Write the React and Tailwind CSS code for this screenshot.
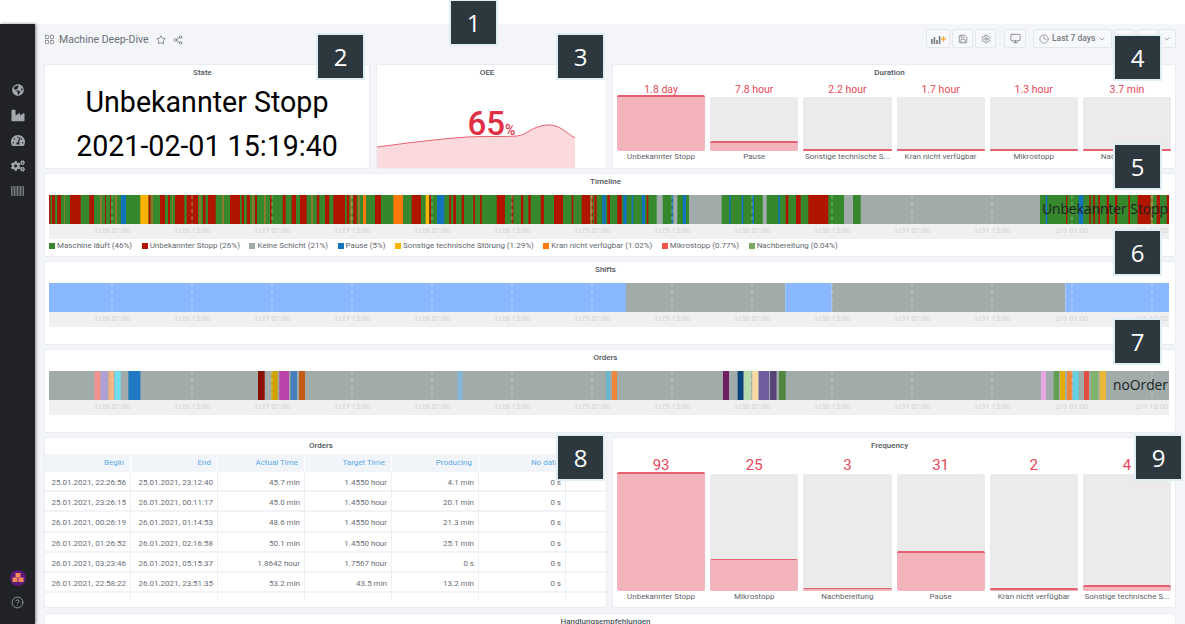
import React from 'react';
import { LayoutGrid, Star, Share2, Save, Settings, Monitor, Clock, ChevronDown, CircleHelp } from 'lucide-react';
import { FaGlobeAmericas, FaIndustry, FaTachometerAlt, FaCogs } from 'react-icons/fa';

const GREEN = '#37872d';
const RED = '#b01500';
const GREY = '#a0abaa';
const BLUE = '#1173bb';
const YELLOW = '#fdb400';
const ORANGE = '#ff780a';
const OLIVE = '#8c7a2c';

// x positions are taken in page pixels, the chart starts at 49
const timelineSegments = [
  ...[[49, 50.5], [52, 55], [57.3, 61], [70, 80.7], [89.3, 94], [105, 106], [110, 111], [148.5, 150.7], [160, 165], [168, 170], [175, 184.3], [186.7, 192.7], [193, 198], [203, 205.5], [208, 215.7], [230, 240], [241.7, 244], [246.7, 250], [255, 257], [270, 271.6], [282.7, 285.7], [291.7, 296], [300, 306.7], [316.7, 319.3], [325, 329.3], [333.3, 345], [346.7, 349.3], [353.3, 356.7], [375, 381], [411.7, 421], [429.5, 431], [449.3, 451], [453.3, 456], [461.7, 464], [473.3, 475], [480, 481.7], [496.7, 505], [511.7, 513.3], [521, 523.3], [528.3, 530.7], [540.7, 544], [554, 563], [571.7, 573.3], [581.7, 593], [594.3, 596.7], [607.3, 610], [617.3, 621.7], [646.7, 648.3], [785.7, 788.3], [796, 800.7], [808.3, 828.3], [1066, 1067.3], [1089.3, 1090.7], [1093.3, 1095], [1098.3, 1100], [1106.7, 1109], [1115, 1117.3], [1128.3, 1130], [1137.7, 1150.7], [1156.7, 1160], [1166.7, 1169]].map((s) => [...s, RED]),
  ...[[121, 126], [437, 444.3], [602.3, 605.7], [623.3, 626.7], [631.7, 633.3], [641.7, 645], [671.7, 673.3], [682.7, 686], [729.3, 730.7], [741.7, 743.3], [752.3, 754], [778.3, 780], [1045.7, 1047.3], [1078.7, 1083.3]].map((s) => [...s, BLUE]),
  ...[[656.7, 662.7], [673.3, 677.3], [689, 721.7], [762.7, 766.7], [844, 853], [860.7, 1040]].map((s) => [...s, GREY]),
  ...[[64, 65], [100, 102], [115, 117], [150.7, 153], [172, 173], [199, 201], [222, 224], [252, 254], [264, 266], [311, 313], [350, 352], [358, 360], [590, 592], [1150.7, 1153]].map((s) => [...s, OLIVE]),
  [140.3, 148.3, YELLOW],
  [363, 366, ORANGE],
  [393.3, 403, ORANGE],
  [425.7, 429, YELLOW],
];

const shiftSegments = [
  [49, 626, '#8ab8ff'],
  [626, 785.3, GREY],
  [785.3, 831.9, '#8ab8ff'],
  [831.9, 1065.4, GREY],
  [1065.4, 1169, '#8ab8ff'],
];

const orderSegments = [
  [49, 1169, GREY],
  [94.5, 100.4, '#f29191'],
  [101, 107.6, '#b0a0d8'],
  [108.4, 114, '#f4b183'],
  [114.5, 120.7, '#6fdcf0'],
  [128.4, 140.4, '#1f78c1'],
  [258, 264.7, '#890f02'],
  [271.3, 277.8, '#cca300'],
  [279.3, 289, '#ba43a9'],
  [290.5, 297, '#447ebc'],
  [299, 305, '#c15c17'],
  [457.5, 462.5, '#82b5d8'],
  [606, 610, '#65b5cc'],
  [612, 617, '#ef843c'],
  [723, 729, '#6d1f62'],
  [737.6, 743.5, '#0a437c'],
  [743.8, 751, '#b7dbab'],
  [752.3, 758, '#f9d9a0'],
  [759, 769, '#705da0'],
  [770, 776.5, '#584477'],
  [779, 785.7, '#508642'],
  [1041, 1046, '#e5a8e2'],
  [1053.7, 1059, '#629e51'],
  [1060, 1065, '#e5ac0e'],
  [1067, 1072, '#ef843c'],
  [1073, 1078.6, '#64d0e0'],
  [1084, 1089, '#e24d42'],
  [1090.7, 1098, '#7eb26d'],
  [1099.5, 1106, '#eab839'],
];

const axisLabels = ['1/26 01:00', '1/26 13:00', '1/27 01:00', '1/27 13:00', '1/28 01:00', '1/28 13:00', '1/29 01:00', '1/29 13:00', '1/30 01:00', '1/30 13:00', '1/31 01:00', '1/31 13:00', '2/1 01:00', '2/1 13:00'];

const legend = [
  ['Maschine läuft (46%)', 'bg-[#37872d]'],
  ['Unbekannter Stopp (26%)', 'bg-[#b01500]'],
  ['Keine Schicht (21%)', 'bg-[#a0abaa]'],
  ['Pause (5%)', 'bg-[#1173bb]'],
  ['Sonstige technische Störung (1.29%)', 'bg-[#fdb400]'],
  ['Kran nicht verfügbar (1.02%)', 'bg-[#ff780a]'],
  ['Mikrostopp (0.77%)', 'bg-[#f7534b]'],
  ['Nachbereitung (0.04%)', 'bg-[#73a965]'],
];

const durationBars = [
  { value: '1.8', unit: 'day', label: 'Unbekannter Stopp', fill: 104, line: 'border-t-2' },
  { value: '7.8', unit: 'hour', label: 'Pause', fill: 18, line: 'border-t-2' },
  { value: '2.2', unit: 'hour', label: 'Sonstige technische S...', fill: 4, line: 'border-t-2' },
  { value: '1.7', unit: 'hour', label: 'Kran nicht verfügbar', fill: 4, line: 'border-t-2' },
  { value: '1.3', unit: 'hour', label: 'Mikrostopp', fill: 4, line: 'border-t-2' },
  { value: '3.7', unit: 'min', label: 'Nachbereitung', fill: 4, line: 'border-t-2' },
];

const frequencyBars = [
  { value: '93', label: 'Unbekannter Stopp', fill: 102, line: 'border-t-2' },
  { value: '25', label: 'Mikrostopp', fill: 27, line: 'border-t' },
  { value: '3', label: 'Nachbereitung', fill: 3, line: 'border-t' },
  { value: '31', label: 'Pause', fill: 34, line: 'border-t-2' },
  { value: '2', label: 'Kran nicht verfügbar', fill: 2.5, line: 'border-t-2' },
  { value: '4', label: 'Sonstige technische S...', fill: 5, line: 'border-t-2' },
];

const orderRows = [
  ['25.01.2021, 22:26:56', '25.01.2021, 23:12:40', '45.7 min', '1.4550 hour', '4.1 min', '0 s'],
  ['25.01.2021, 23:26:15', '26.01.2021, 00:11:17', '45.0 min', '1.4550 hour', '20.1 min', '0 s'],
  ['26.01.2021, 00:26:19', '26.01.2021, 01:14:53', '48.6 min', '1.4550 hour', '21.3 min', '0 s'],
  ['26.01.2021, 01:26:52', '26.01.2021, 02:16:58', '50.1 min', '1.4550 hour', '25.1 min', '0 s'],
  ['26.01.2021, 03:23:46', '26.01.2021, 05:15:37', '1.8642 hour', '1.7567 hour', '0 s', '0 s'],
  ['26.01.2021, 22:58:22', '26.01.2021, 23:51:35', '53.2 min', '43.5 min', '13.2 min', '0 s'],
];

const tableHead = ['Begin', 'End', 'Actual Time', 'Target Time', 'Producing', 'No data', ''];

const markers = [
  { n: 1, pos: 'left-[449px] top-[-1px]' },
  { n: 2, pos: 'left-[316px] top-[33px]' },
  { n: 3, pos: 'left-[556px] top-[33px]' },
  { n: 4, pos: 'left-[1113px] top-[34px]' },
  { n: 5, pos: 'left-[1113px] top-[143px]' },
  { n: 6, pos: 'left-[1113px] top-[229px]' },
  { n: 7, pos: 'left-[1113px] top-[318px]' },
  { n: 8, pos: 'left-[556px] top-[434px]' },
  { n: 9, pos: 'left-[1134px] top-[434px]' },
];

const Panel = ({ title, className = '', children }) => (
  <div className={`relative bg-white border border-[#e9edf2] rounded-[3px] overflow-hidden ${className}`}>
    <div className="h-[15px] pt-[1px] pr-[9px] text-center text-[8px] leading-[13px] font-medium text-[#50555c]">{title}</div>
    {children}
  </div>
);

const ToolButton = ({ className = '', children }) => (
  <div className={`h-[19px] flex items-center justify-center bg-[#f7f8fa] border border-[#e4e7eb] rounded-[2px] text-[#767980] ${className}`}>
    {children}
  </div>
);

const Track = ({ segments }) => (
  <svg width="1120" height="44" className="block">
    <rect x="0" y="29" width="1120" height="15" fill="#f0f0f0" />
    {segments.map(([start, end, color], i) => (
      <rect key={i} x={start - 49} y="0" width={end - start} height="29" fill={color} />
    ))}
    {axisLabels.map((label, i) => (
      <g key={label}>
        <line x1={63 + i * 80} x2={63 + i * 80} y1="0" y2="33" stroke="#ffffff" strokeOpacity="0.38" strokeDasharray="4 3" />
        <text x={63 + i * 80} y="38" textAnchor="middle" fontSize="7.5" fill="#d2d3d5">{label}</text>
      </g>
    ))}
  </svg>
);

const TimelinePanel = ({ title, segments, overlay, className = '', children }) => (
  <Panel title={title} className={`h-[84px] shrink-0 ${className}`}>
    <div className="relative w-[1120px] ml-[4px] mt-[6px]">
      <Track segments={segments} />
      {overlay && (
        <div className="absolute right-[1px] top-[4px] text-[13.8px] leading-[20px] text-[#1d1f22] [font-family:'Open_Sans',sans-serif]">
          {overlay}
        </div>
      )}
    </div>
    {children}
  </Panel>
);

const GaugeBar = ({ bar, trackHeight, big }) => (
  <div className="flex-1 min-w-0 flex flex-col">
    <div className={`text-center text-[#e8475a] ${big ? 'h-[18px] text-[15px] leading-[18px]' : 'h-[15px] text-[10.5px] leading-[16px]'}`}>
      {bar.value}{bar.unit ? ` ${bar.unit}` : ''}
    </div>
    <div className={`relative flex flex-col justify-end bg-[#ebebeb] rounded-[2px] ${trackHeight}`}>
      <div className={`shrink-0 bg-[#f3b4bc] border-[#e2606f] rounded-[2px] ${bar.line}`} style={{ height: `${bar.fill}%` }} />
    </div>
    <div className="mt-[1px] text-center text-[8px] leading-[10px] text-[#5f6369] truncate">{bar.label}</div>
  </div>
);

const Sidebar = () => (
  <div className="w-[35px] shrink-0 h-full bg-[#202226] flex flex-col items-center text-[#a3a7ad] shadow-[1px_0_3px_rgba(0,0,0,0.45)] z-10">
    <div className="mt-[53px] flex flex-col items-center">
      <FaGlobeAmericas className="w-[12px] h-[12px] my-[7px]" />
      <FaIndustry className="w-[14px] h-[13px] my-[6px]" />
      <FaTachometerAlt className="w-[14px] h-[13px] my-[6px]" />
      <FaCogs className="w-[14px] h-[14px] mt-[6px] mb-[5px]" />
      <svg width="13" height="10" viewBox="0 0 13 10" className="mt-[8px]">
        <path d="M0.5 0v10M2 0v10M3.5 0v10M5 0v10M6.5 0v10M8 0v10M9.5 0v10M11 0v10M12.5 0v10" stroke="#7d8187" strokeWidth="0.9" />
      </svg>
    </div>
    <div className="mt-auto mb-[15px] flex flex-col items-center">
      <svg width="16" height="16" viewBox="0 0 16 16">
        <circle cx="8" cy="8" r="8" fill="#5b1a78" />
        <rect x="5.5" y="3" width="5" height="4.5" fill="#f58a5e" />
        <rect x="2.5" y="7.5" width="5" height="4.5" fill="#f58a5e" />
        <rect x="8.5" y="7.5" width="5" height="4.5" fill="#f58a5e" />
      </svg>
      <CircleHelp className="w-[13px] h-[13px] mt-[10px]" strokeWidth={1.6} />
    </div>
  </div>
);

const Header = () => (
  <div className="h-[40px] shrink-0 flex items-start pt-[5px]">
    <div className="flex items-center h-[19px] mt-[1px] text-[#767980]">
      <LayoutGrid className="w-[11px] h-[11px]" strokeWidth={1.6} />
      <span className="ml-[4px] text-[10.5px] text-[#6b6f76]">Machine Deep-Dive</span>
      <Star className="ml-[7px] w-[10px] h-[10px]" strokeWidth={2} />
      <Share2 className="ml-[7px] w-[10px] h-[10px]" strokeWidth={2} />
    </div>
    <div className="ml-auto flex items-center">
      <ToolButton className="w-[24px]">
        <svg width="15" height="10" viewBox="0 0 15 10">
          <path d="M0 10V5h1.6v5zM2.6 10V3h1.6v7zM5.2 10V6h1.6v4zM7.8 10V2h1.6v8z" fill="#767980" />
          <path d="M10 4.3h2V2.3h1.2v2h1.8v1.2h-1.8v2H12v-2h-2z" fill="#f5a623" />
        </svg>
      </ToolButton>
      <ToolButton className="w-[21px] ml-[2px]"><Save className="w-[10px] h-[10px]" strokeWidth={1.8} /></ToolButton>
      <ToolButton className="w-[21px] ml-[2px]"><Settings className="w-[10px] h-[10px]" strokeWidth={1.8} /></ToolButton>
      <ToolButton className="w-[22px] ml-[8px]"><Monitor className="w-[11px] h-[11px]" strokeWidth={1.8} /></ToolButton>
      <ToolButton className="w-[79px] ml-[7px] justify-start pl-[5px]">
        <Clock className="w-[10px] h-[10px] shrink-0" strokeWidth={1.6} />
        <span className="ml-[3px] text-[8.5px] font-medium whitespace-nowrap">Last 7 days</span>
        <ChevronDown className="ml-auto mr-[5px] w-[8px] h-[8px] shrink-0" strokeWidth={2} />
      </ToolButton>
      <ToolButton className="w-[20px] ml-[2px]" />
      <ToolButton className="w-[21px] ml-[3px]" />
      <ToolButton className="w-[18px]"><ChevronDown className="w-[8px] h-[8px]" strokeWidth={2} /></ToolButton>
    </div>
  </div>
);

const OrdersTable = () => (
  <div className="text-[8px] text-[#6a6e75]">
    <div className="mt-[1px] grid grid-cols-[86px_87px_87px_87px_87px_87px_1fr] h-[18px] bg-[#f1f5f9] text-[#5ca8ea] leading-[18px]">
      {tableHead.map((head, i) => (
        <div key={i} className="text-right pr-[6px] border-r border-white last:border-r-0">{head}</div>
      ))}
    </div>
    {orderRows.map((row) => (
      <div key={row[0]} className="grid grid-cols-[86px_87px_87px_87px_87px_87px_1fr] h-[20.2px] leading-[21px] border-b-2 border-[#f1f3f6]">
        {[...row, ''].map((cell, i) => (
          <div key={i} className="text-right pr-[4px] border-r border-[#edf0f4] last:border-r-0 whitespace-nowrap">{cell}</div>
        ))}
      </div>
    ))}
    <div className="grid grid-cols-[86px_87px_87px_87px_87px_87px_1fr] h-[7px]">
      {tableHead.map((_, i) => (
        <div key={i} className="border-r border-[#edf0f4] last:border-r-0" />
      ))}
    </div>
  </div>
);

export default function App() {
  return (
    <div className="relative w-[1185px] h-[624px] overflow-hidden bg-white [font-family:Roboto,sans-serif]">
      <div className="h-[24px]" />
      <div className="flex h-[600px]">
        <Sidebar />
        <div className="flex-1 min-w-0 bg-[#f4f5f8] pl-[9px] pr-[9px] flex flex-col overflow-hidden">
          <Header />

          <div className="flex h-[105px] shrink-0">
            <Panel title="State" className="w-[326px] shrink-0">
              <div className="mt-[4px] text-center text-[28.6px] leading-[36px] text-black whitespace-nowrap">Unbekannter Stopp</div>
              <div className="mt-[8px] text-center text-[28.6px] leading-[36px] text-black whitespace-nowrap">2021-02-01 15:19:40</div>
            </Panel>
            <Panel title="OEE" className="w-[231px] ml-[6px] shrink-0">
              <svg width="198" height="50" viewBox="0 0 198 50" className="absolute left-0 bottom-0">
                <path d="M0 29 C30 25 60 21 90 19 C110 18 125 19 140 18 C150 17 155 8 170 7 C182 6 188 14 198 20 V50 H0 Z" fill="#fbdadd" />
                <path d="M0 29 C30 25 60 21 90 19 C110 18 125 19 140 18 C150 17 155 8 170 7 C182 6 188 14 198 20" fill="none" stroke="#e8606f" strokeWidth="1" />
              </svg>
              <div className="relative mt-[24px] text-center text-[#e02f44] font-medium">
                <span className="text-[33px] leading-[40px]">65</span>
                <span className="text-[14px]">%</span>
              </div>
            </Panel>
            <Panel title="Duration" className="flex-1 min-w-0 ml-[5px]">
              <div className="flex gap-[5px] px-[4px] mt-[2px]">
                {durationBars.map((bar) => (
                  <GaugeBar key={bar.label} bar={bar} trackHeight="h-[54px]" />
                ))}
              </div>
            </Panel>
          </div>

          <TimelinePanel title="Timeline" segments={[[49, 1169, GREEN], ...timelineSegments]} overlay="Unbekannter Stopp" className="mt-[4px]">
            <div className="flex ml-[4px] mt-[1px] h-[12px] items-center text-[8px] text-[#63676d] whitespace-nowrap">
              {legend.map(([label, color]) => (
                <div key={label} className="flex items-center mr-[9.5px]">
                  <span className={`w-[6px] h-[6px] mr-[2px] ${color}`} />
                  {label}
                </div>
              ))}
            </div>
          </TimelinePanel>
          <TimelinePanel title="Shifts" segments={shiftSegments} className="mt-[4px]" />
          <TimelinePanel title="Orders" segments={orderSegments} overlay="noOrder" className="mt-[4px]" />

          <div className="flex h-[171px] shrink-0 mt-[4px]">
            <Panel title="Orders" className="w-[563px] shrink-0">
              <OrdersTable />
            </Panel>
            <Panel title="Frequency" className="flex-1 min-w-0 ml-[5px]">
              <div className="flex gap-[5px] px-[4px] mt-[3px]">
                {frequencyBars.map((bar) => (
                  <GaugeBar key={bar.label} bar={bar} trackHeight="h-[117px]" big />
                ))}
              </div>
            </Panel>
          </div>

          <Panel title="Handlungsempfehlungen" className="h-[60px] shrink-0 mt-[5px]" />
        </div>
      </div>

      {markers.map((m) => (
        <div key={m.n} className={`absolute w-[49px] h-[47px] flex items-center justify-center bg-[#2d383e] border-2 border-[#dfeef2] text-white text-[24px] [font-family:'Open_Sans',sans-serif] ${m.pos}`}>
          {m.n}
        </div>
      ))}
    </div>
  );
}
